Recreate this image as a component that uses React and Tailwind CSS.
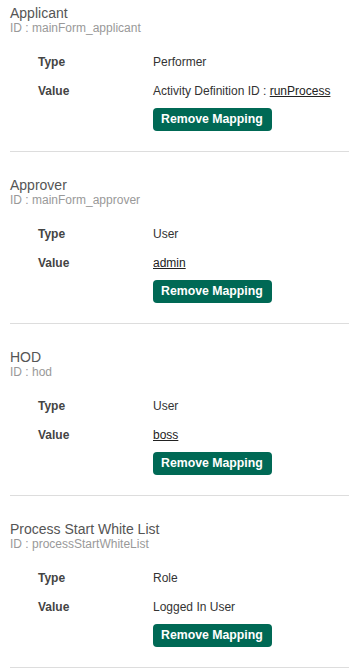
import React from 'react';

const mappings = [
  { title: 'Applicant', id: 'mainForm_applicant', type: 'Performer', prefix: 'Activity Definition ID : ', link: 'runProcess' },
  { title: 'Approver', id: 'mainForm_approver', type: 'User', link: 'admin' },
  { title: 'HOD', id: 'hod', type: 'User', link: 'boss' },
  { title: 'Process Start White List', id: 'processStartWhiteList', type: 'Role', text: 'Logged In User' },
];

const Mapping = ({ item }) => (
  <div className="pt-[4px] pb-[20px] mb-[20px] border-b border-[#dddddd]">
    <div className="text-[14px] leading-[18px] text-[#555555]">{item.title}</div>
    <div className="text-[12px] leading-[13px] text-[#999999]">ID : {item.id}</div>
    <div className="mt-[12px] pl-[28px] text-[12px]">
      <div className="flex h-[29px] items-center">
        <div className="w-[115px] font-bold text-[#444444]">Type</div>
        <div className="text-[#333333]">{item.type}</div>
      </div>
      <div className="flex h-[29px] items-center">
        <div className="w-[115px] font-bold text-[#444444]">Value</div>
        <div className="text-[#333333]">
          {item.prefix}
          {item.link ? <a href="#" className="underline text-[#222222]">{item.link}</a> : item.text}
        </div>
      </div>
      <div className="pl-[115px] mt-[3px]">
        <button className="h-[23px] pl-[8px] pr-[9px] rounded-[4px] bg-[#006955] text-white font-bold text-[12.3px] leading-none">
          Remove Mapping
        </button>
      </div>
    </div>
  </div>
);

export default function App() {
  return (
    <div className="pl-[10px] bg-white min-h-screen" style={{ fontFamily: '"Liberation Sans", Arial, sans-serif' }}>
      {mappings.map((m) => (
        <Mapping key={m.id} item={m} />
      ))}
    </div>
  );
}
